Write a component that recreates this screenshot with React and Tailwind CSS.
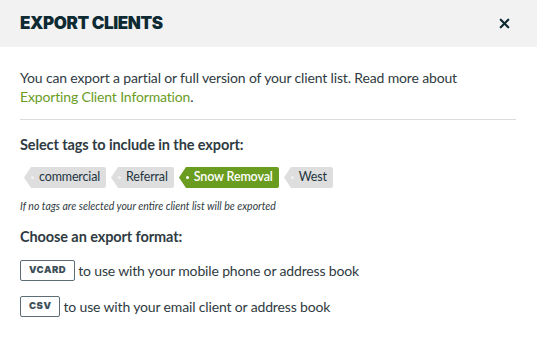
import React from 'react';
import { X } from 'lucide-react';

const TAGS = [
  { label: 'commercial', active: false },
  { label: 'Referral', active: false },
  { label: 'Snow Removal', active: true },
  { label: 'West', active: false },
];

const FORMATS = [
  { key: 'VCARD', text: 'to use with your mobile phone or address book' },
  { key: 'CSV', text: 'to use with your email client or address book' },
];

const Tag = ({ label, active }) => (
  <div className="flex items-center h-[21px]">
    {/* pointed left end */}
    <svg width="7" height="21" viewBox="0 0 7 21" className="block">
      <path d="M7 0 L0 10.5 L7 21 Z" fill={active ? '#6a9c1f' : '#dedede'} />
    </svg>
    <div
      className={`flex items-center h-[21px] pr-[6px] rounded-r-[2px] text-[12.5px] tracking-[-0.15px] ${
        active ? 'bg-[#6a9c1f] text-white font-semibold' : 'bg-[#dedede] text-[#23343e]'
      }`}
    >
      <span className={`w-[3px] h-[3px] rounded-full mr-[5px] ${active ? 'bg-white' : 'bg-[#f2f2f2]'}`} />
      {label}
    </div>
  </div>
);

export default function App() {
  return (
    <div className="w-[537px] h-[338px] bg-white font-['Lato',sans-serif] text-[#2f3b42]">
      <div className="h-[47px] bg-[#f2f2f2] flex items-center justify-between pl-[20px] pr-[25px]">
        <h1 className="font-['Inter',sans-serif] font-black text-[17px] tracking-[-0.4px] text-[#0e2a33]">
          EXPORT CLIENTS
        </h1>
        <X size={15} strokeWidth={3.5} className="text-[#0e2a33]" />
      </div>

      <div className="px-[20px] pr-[21px]">
        <div className="pt-[21px] pb-[13px] border-b border-[#dcdcdc] text-[14px] tracking-[-0.15px] leading-[19px]">
          You can export a partial or full version of your client list. Read more about{' '}
          <span className="text-[#6a9c1f]">Exporting Client Information</span>.
        </div>

        <div className="mt-[16px] font-bold text-[14.5px] tracking-[-0.1px] leading-[18px] text-[#2f3b42]">
          Select tags to include in the export:
        </div>

        <div className="flex gap-[5px] mt-[13px] ml-[4px]">
          {TAGS.map((t) => (
            <Tag key={t.label} {...t} />
          ))}
        </div>

        <div className="mt-[11px] italic text-[10.5px] leading-[14px] text-[#2f3b42]">
          If no tags are selected your entire client list will be exported
        </div>

        <div className="mt-[15px] font-bold text-[14.5px] tracking-[-0.1px] leading-[18px]">Choose an export format:</div>

        <div className="mt-[14px] flex flex-col gap-[15px]">
          {FORMATS.map((f) => (
            <div key={f.key} className="flex items-center gap-[3px] text-[14px] tracking-[-0.15px]">
              <span className="h-[21px] px-[8px] flex items-center border border-[#5d6d75] rounded-[2px] font-['Inter',sans-serif] font-black text-[9.5px] tracking-[0.5px] text-[#3d4f58]">
                {f.key}
              </span>
              <span>{f.text}</span>
            </div>
          ))}
        </div>
      </div>
    </div>
  );
}
